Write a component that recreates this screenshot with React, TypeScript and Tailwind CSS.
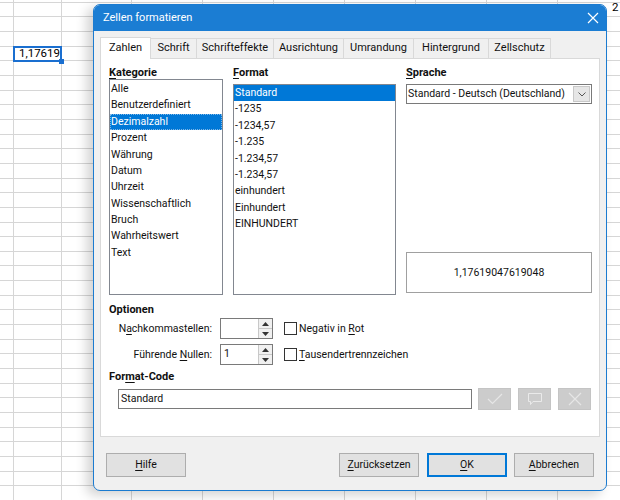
import React from "react";

const U = ({ c }: { c: string }) => <span className="underline underline-offset-[2px]">{c}</span>;

const cols = [14, 48, 70, 71, 71, 71, 71, 71, 71, 71];

function Grid() {
  const rows = Array.from({ length: 36 });
  return (
    <div className="absolute inset-0 overflow-hidden bg-white">
      <div className="flex flex-col mt-[-12px]">
        {rows.map((_, r) => (
          <div key={r} className="flex h-[14.67px] shrink-0">
            {cols.map((w, c) => (
              <div
                key={c}
                style={{ width: w }}
                className="shrink-0 border-r border-b border-[#d6d6d6] relative"
              >
                {r === 4 && c === 1 && (
                  <div className="absolute left-[-1px] top-[-1px] w-[49px] h-[16px] border-2 border-[#1a6fd0] flex items-center justify-end pr-[0px] text-[11.5px] text-black leading-none z-10">
                    1,17619
                    <div className="absolute right-[-4px] bottom-[-4px] w-[5px] h-[5px] bg-[#1a6fd0]" />
                  </div>
                )}
              </div>
            ))}
          </div>
        ))}
      </div>
      <div className="absolute left-[612px] top-[2px] text-[11.5px] leading-none text-black">2</div>
    </div>
  );
}

function Spin({ value }: { value: string }) {
  return (
    <div className="flex w-[53px] h-[21px] border border-[#7a7a7a] bg-white">
      <div className="flex-1 pl-[3px] flex items-center leading-none">{value}</div>
      <div className="w-[14px] flex flex-col border-l border-[#c8c8c8]">
        <div className="flex-1 flex items-center justify-center bg-[#f0f0f0] border-b border-[#c8c8c8]">
          <svg width="7" height="4" viewBox="0 0 7 4"><path d="M0 4 L3.5 0 L7 4 Z" fill="#333" /></svg>
        </div>
        <div className="flex-1 flex items-center justify-center bg-[#f0f0f0]">
          <svg width="7" height="4" viewBox="0 0 7 4"><path d="M0 0 L3.5 4 L7 0 Z" fill="#333" /></svg>
        </div>
      </div>
    </div>
  );
}

function Btn({ children, def }: { children: React.ReactNode; def?: boolean }) {
  return (
    <div
      className={
        "w-[80px] h-[24px] flex items-center justify-center bg-[#e1e1e1] " +
        (def ? "border-2 border-[#0078d7]" : "border border-[#adadad]")
      }
    >
      {children}
    </div>
  );
}

export default function App() {
  const kategorien = [
    "Alle",
    "Benutzerdefiniert",
    "Dezimalzahl",
    "Prozent",
    "Währung",
    "Datum",
    "Uhrzeit",
    "Wissenschaftlich",
    "Bruch",
    "Wahrheitswert",
    "Text",
  ];
  const formate = [
    "Standard",
    "-1235",
    "-1234,57",
    "-1.235",
    "-1.234,57",
    "-1.234,57",
    "einhundert",
    "Einhundert",
    "EINHUNDERT",
  ];
  const tabs = ["Zahlen", "Schrift", "Schrifteffekte", "Ausrichtung", "Umrandung", "Hintergrund", "Zellschutz"];
  const tabW = [51, 47, 78, 71, 71, 76, 63];

  return (
    <div className="relative w-[620px] h-[500px] overflow-hidden font-['Roboto',sans-serif] text-[10.5px] text-[#111]">
      <Grid />
      <div className="absolute left-[93px] top-[4px] w-[514px] h-[487px] rounded-[7px] border border-[#1b7bd0] bg-[#f0f0f0] shadow-[-6px_4px_12px_rgba(0,0,0,0.18)] overflow-hidden flex flex-col">
        {/* title bar */}
        <div className="h-[26px] shrink-0 bg-[#1b7dd3] flex items-center justify-between pl-[9px] pr-[7px] text-white">
          <span className="text-[11px]">Zellen formatieren</span>
          <svg width="12" height="12" viewBox="0 0 12 12">
            <path d="M1 1 L11 11 M11 1 L1 11" stroke="white" strokeWidth="1.2" />
          </svg>
        </div>
        {/* body */}
        <div className="flex-1 flex flex-col px-[6px] pt-[5px]">
          {/* tabs */}
          <div className="flex h-[22px] items-end">
            {tabs.map((t, i) => (
              <div
                key={t}
                style={{ width: tabW[i] }}
                className={
                  "flex items-center justify-center border border-[#d9d9d9] border-b-0 text-[11px] " +
                  (i === 0
                    ? "h-[22px] bg-white relative z-10 mb-[-1px] pb-[1px]"
                    : "h-[20px] bg-[#f0f0f0] ml-[-1px]")
                }
              >
                {t}
              </div>
            ))}
          </div>
          {/* panel */}
          <div className="h-[379px] bg-white border border-[#d9d9d9] flex flex-col pl-[8px] pr-[7px] pt-[7px]">
            <div className="flex gap-[10px]">
              {/* Kategorie */}
              <div className="w-[114px] flex flex-col">
                <div className="font-bold text-[11px] h-[13px] leading-[13px]">
                  <U c="K" />ategorie
                </div>
                <div className="mt-[0px] h-[216px] border border-[#828790] bg-white pt-[1px]">
                  {kategorien.map((k) => (
                    <div
                      key={k}
                      className={
                        "h-[16.4px] flex items-center pl-[1px] leading-none " +
                        (k === "Dezimalzahl" ? "bg-[#0078d7] text-white outline outline-1 outline-dotted outline-[#7fb6e6] -outline-offset-1" : "")
                      }
                    >
                      {k}
                    </div>
                  ))}
                </div>
              </div>
              {/* Format */}
              <div className="w-[163px] flex flex-col">
                <div className="font-bold text-[11px] h-[13px] leading-[13px]">
                  <U c="F" />ormat
                </div>
                <div className="mt-[5px] h-[211px] border border-[#828790] bg-white">
                  {formate.map((f, i) => (
                    <div
                      key={i}
                      className={
                        "h-[16.4px] flex items-center pl-[1px] leading-none " +
                        (i === 0 ? "bg-[#0078d7] text-white" : "")
                      }
                    >
                      {f}
                    </div>
                  ))}
                </div>
              </div>
              {/* Sprache */}
              <div className="w-[186px] flex flex-col">
                <div className="font-bold text-[11px] h-[13px] leading-[13px]">
                  <U c="S" />prache
                </div>
                <div className="mt-[5px] h-[20px] border border-[#7a7a7a] bg-white flex">
                  <div className="flex-1 flex items-center pl-[1px] leading-none whitespace-nowrap overflow-hidden">Standard - Deutsch (Deutschland)</div>
                  <div className="w-[17px] my-[1px] mr-[1px] bg-[#e6e6e6] border border-[#c8c8c8] flex items-center justify-center">
                    <svg width="8" height="5" viewBox="0 0 8 5">
                      <path d="M0.5 0.5 L4 4 L7.5 0.5" stroke="#555" fill="none" strokeWidth="1" />
                    </svg>
                  </div>
                </div>
                <div className="mt-[148px] h-[41px] border border-[#a0a0a0] bg-white flex items-center justify-center">
                  1,17619047619048
                </div>
              </div>
            </div>

            {/* Optionen */}
            <div className="mt-[8px] font-bold text-[11px] h-[14px] leading-[14px]">Optionen</div>
            <div className="mt-[1px] flex">
              <div className="w-[103px] flex flex-col items-end gap-[5px] whitespace-nowrap">
                <div className="h-[21px] flex items-center">
                  <span>
                    N<U c="a" />chkommastellen:
                  </span>
                </div>
                <div className="h-[21px] flex items-center">
                  <span>
                    Führende <U c="N" />ullen:
                  </span>
                </div>
              </div>
              <div className="ml-[8px] flex flex-col gap-[5px]">
                <Spin value="" />
                <Spin value="1" />
              </div>
              <div className="ml-[11px] flex flex-col gap-[5px]">
                <div className="h-[21px] flex items-center gap-[2px]">
                  <div className="w-[13px] h-[13px] border border-[#333] bg-white" />
                  <span>
                    Negativ in <U c="R" />ot
                  </span>
                </div>
                <div className="h-[21px] flex items-center gap-[2px]">
                  <div className="w-[13px] h-[13px] border border-[#333] bg-white" />
                  <span>
                    <U c="T" />ausendertrennzeichen
                  </span>
                </div>
              </div>
            </div>

            {/* Format-Code */}
            <div className="mt-[5px] font-bold text-[11px] h-[14px] leading-[14px]">
              For<U c="m" />at-Code
            </div>
            <div className="mt-[4px] flex items-center pl-[9px]">
              <div className="w-[354px] h-[20px] border border-[#7a7a7a] bg-white flex items-center pl-[2px] leading-none">
                Standard
              </div>
              <div className="ml-[6px] w-[33px] h-[22px] bg-[#cccccc] border border-[#c4c4c4] flex items-center justify-center">
                <svg width="16" height="12" viewBox="0 0 16 12">
                  <path d="M1 6 L5.5 10.5 L15 1" stroke="#e6e6e6" strokeWidth="1.2" fill="none" />
                </svg>
              </div>
              <div className="ml-[7px] w-[33px] h-[22px] bg-[#cccccc] border border-[#c4c4c4] flex items-center justify-center">
                <svg width="16" height="14" viewBox="0 0 16 14">
                  <path d="M1.5 1.5 H14.5 V9.5 H6 L3.5 12.5 V9.5 H1.5 Z" stroke="#eaeaea" strokeWidth="1" fill="none" />
                </svg>
              </div>
              <div className="ml-[7px] w-[33px] h-[22px] bg-[#cccccc] border border-[#c4c4c4] flex items-center justify-center">
                <svg width="14" height="14" viewBox="0 0 14 14">
                  <path d="M1 1 L13 13 M13 1 L1 13" stroke="#e6e6e6" strokeWidth="1.2" />
                </svg>
              </div>
            </div>
          </div>

          {/* bottom buttons */}
          <div className="mt-[16px] flex pl-[6px] pr-[6px]">
            <Btn>
              <span>
                <U c="H" />ilfe
              </span>
            </Btn>
            <div className="flex-1" />
            <Btn>
              <span>
                <U c="Z" />urücksetzen
              </span>
            </Btn>
            <div className="ml-[8px]">
              <Btn def>
                <span>
                  <U c="O" />K
                </span>
              </Btn>
            </div>
            <div className="ml-[7px]">
              <Btn>
                <span>
                  <U c="A" />bbrechen
                </span>
              </Btn>
            </div>
          </div>
        </div>
      </div>
    </div>
  );
}
